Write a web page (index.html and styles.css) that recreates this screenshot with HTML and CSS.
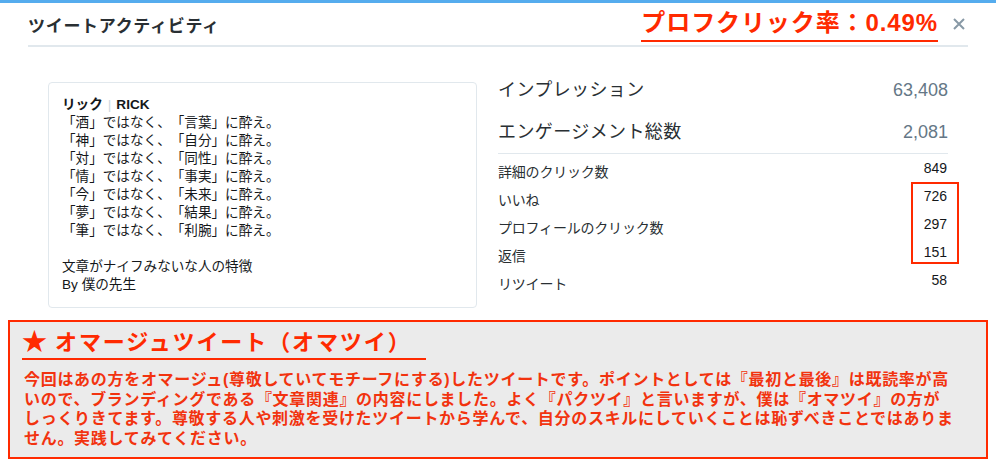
FILE: index.html
```html
<!DOCTYPE html>
<html lang="ja">
<head>
  <meta charset="UTF-8">
  <meta name="viewport" content="width=device-width, initial-scale=1.0">
  <title>ツイートアクティビティ</title>
  <link rel="stylesheet" href="styles.css">
</head>
<body>
  <div class="topbar"></div>

  <div class="header">
    <h1 class="title">ツイートアクティビティ</h1>
    <div class="header-right">
      <span class="rate">プロフクリック率：0.49%</span>
      <span class="close">
        <svg width="12" height="12" viewBox="0 0 12 12"><path d="M1 1 L11 11 M11 1 L1 11" stroke="#8899a6" stroke-width="2" fill="none"/></svg>
      </span>
    </div>
  </div>

  <div class="content">
    <div class="tweet">
      <p class="name">リック<span class="sep">|</span>RICK</p>
      <p>「酒」ではなく、「言葉」に酔え。</p>
      <p>「神」ではなく、「自分」に酔え。</p>
      <p>「対」ではなく、「同性」に酔え。</p>
      <p>「情」ではなく、「事実」に酔え。</p>
      <p>「今」ではなく、「未来」に酔え。</p>
      <p>「夢」ではなく、「結果」に酔え。</p>
      <p>「筆」ではなく、「利腕」に酔え。</p>
      <p>&nbsp;</p>
      <p>文章がナイフみないな人の特徴</p>
      <p>By 僕の先生</p>
    </div>

    <div class="stats">
      <div class="big-row"><span>インプレッション</span><span class="big-num">63,408</span></div>
      <div class="big-row"><span>エンゲージメント総数</span><span class="big-num">2,081</span></div>
      <div class="divider"></div>
      <div class="row"><span class="label">詳細のクリック数</span><span class="num">849</span></div>
      <div class="row"><span class="label">いいね</span><span class="num">726</span></div>
      <div class="row"><span class="label">プロフィールのクリック数</span><span class="num">297</span></div>
      <div class="row"><span class="label">返信</span><span class="num">151</span></div>
      <div class="row"><span class="label">リツイート</span><span class="num">58</span></div>
      <div class="highlight"></div>
    </div>
  </div>

  <div class="note">
    <h2 class="note-title"><span class="star">★</span> オマージュツイート（オマツイ）</h2>
    <p class="note-body">今回はあの方をオマージュ(尊敬していてモチーフにする)したツイートです。ポイントとしては『最初と最後』は既読率が高<br>いので、ブランディングである『文章関連』の内容にしました。よく『パクツイ』と言いますが、僕は『オマツイ』の方が<br>しっくりきてます。尊敬する人や刺激を受けたツイートから学んで、自分のスキルにしていくことは恥ずべきことではありま<br>せん。実践してみてください。</p>
  </div>
</body>
</html>
```

FILE: styles.css
```css
body {
  margin: 0;
  background-color: #fff;
  font-family: "Liberation Sans", "Noto Sans CJK JP", sans-serif;
  color: #292f33;
  text-spacing-trim: space-all;
}

p, h1, h2 {
  margin: 0;
}

.topbar {
  height: 3px;
  background-color: #55acee;
}

.header {
  display: flex;
  justify-content: space-between;
  align-items: flex-start;
  margin: 0 28px;
  height: 42px;
  border-bottom: 2px solid #e1e8ed;
}

.title {
  padding-top: 12px;
  font-size: 17px;
  line-height: 24px;
  font-weight: bold;
  letter-spacing: 0.7px;
}

.header-right {
  display: flex;
  align-items: flex-start;
  padding-right: 3px;
}

.rate {
  margin-top: 5px;
  padding-bottom: 2px;
  font-size: 24px;
  line-height: 30px;
  font-weight: bold;
  color: #ff2a00;
  border-bottom: 2px solid #ff2a00;
  letter-spacing: 0.9px;
}

.close {
  display: flex;
  margin-left: 15px;
  margin-top: 15px;
}

.content {
  display: flex;
  align-items: flex-start;
  padding: 0 48px;
  margin-top: 22px;
}

.tweet {
  box-sizing: border-box;
  width: 429px;
  margin-top: 13px;
  padding: 13px 14px 13px 13px;
  border: 1px solid #e1e8ed;
  border-radius: 4px;
  font-size: 13.6px;
  line-height: 18px;
  color: #14171a;
}

.name {
  font-weight: bold;
}

.sep {
  margin: 0 5px;
  color: #ccd6dd;
  font-weight: normal;
}

.stats {
  position: relative;
  width: 450px;
  margin-left: 21px;
}

.big-row {
  display: flex;
  justify-content: space-between;
  height: 42px;
  line-height: 42px;
  font-size: 18px;
  letter-spacing: 0.4px;
}

.big-num {
  color: #657786;
  letter-spacing: 0;
}

.divider {
  height: 1px;
  background-color: #e1e8ed;
  margin-bottom: 4px;
}

.row {
  display: flex;
  justify-content: space-between;
  align-items: flex-start;
  height: 28px;
  font-size: 14px;
}

.label {
  padding-top: 4px;
  line-height: 20px;
  letter-spacing: -0.2px;
}

.num {
  padding-right: 1px;
  line-height: 20px;
  color: #14171a;
}

.highlight {
  position: absolute;
  left: 413px;
  top: 113px;
  width: 48px;
  height: 82px;
  box-sizing: border-box;
  border: 2px solid #ff2a00;
}

.note {
  margin: 12px 8px 0;
  padding: 6px 10px 9px 12px;
  background-color: #ebebeb;
  border: 2px solid #ff2a00;
}

.note-title {
  display: block;
  width: fit-content;
  height: 30px;
  padding-right: 14px;
  font-size: 22px;
  line-height: 30px;
  font-weight: bold;
  color: #ff2a00;
  border-bottom: 2px solid #ff2a00;
  letter-spacing: 1.9px;
}

.star {
  font-size: 25px;
  line-height: 0;
  letter-spacing: 0;
}

.note-body {
  margin-top: 10px;
  padding-left: 2px;
  font-size: 16px;
  line-height: 19.5px;
  font-weight: bold;
  color: #f2330f;
  letter-spacing: 0.7px;
}
```
